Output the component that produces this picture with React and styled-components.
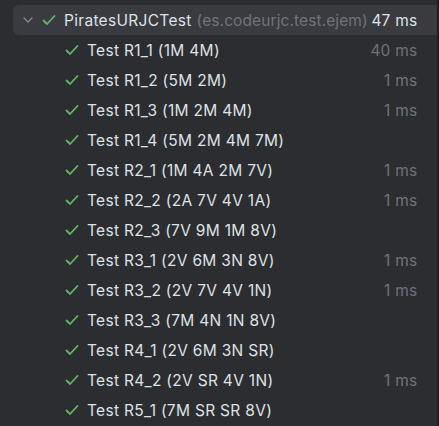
import React from "react";
import styled, { createGlobalStyle } from "styled-components";

const GlobalStyle = createGlobalStyle`
  html, body {
    margin: 0;
    background: #2b2d30;
  }
  body {
    font-family: Inter, "Noto Sans", sans-serif;
  }
`;

const tests = [
  { name: "Test R1_1 (1M 4M)", time: "40 ms" },
  { name: "Test R1_2 (5M 2M)", time: "1 ms" },
  { name: "Test R1_3 (1M 2M 4M)", time: "1 ms" },
  { name: "Test R1_4 (5M 2M 4M 7M)", time: "" },
  { name: "Test R2_1 (1M 4A 2M 7V)", time: "1 ms" },
  { name: "Test R2_2 (2A 7V 4V 1A)", time: "1 ms" },
  { name: "Test R2_3 (7V 9M 1M 8V)", time: "" },
  { name: "Test R3_1 (2V 6M 3N 8V)", time: "1 ms" },
  { name: "Test R3_2 (2V 7V 4V 1N)", time: "1 ms" },
  { name: "Test R3_3 (7M 4N 1N 8V)", time: "" },
  { name: "Test R4_1 (2V 6M 3N SR)", time: "" },
  { name: "Test R4_2 (2V SR 4V 1N)", time: "1 ms" },
  { name: "Test R5_1 (7M SR SR 8V)", time: "" },
];

const Panel = styled.div`
  width: 439px;
  height: 426px;
  box-sizing: border-box;
  padding-top: 5px;
  border-right: 2px solid #1e1f22;
  background: #2b2d30;
  overflow: hidden;
`;

const Row = styled.div`
  height: 30px;
  display: flex;
  align-items: center;
  margin-left: 13px;
  padding-left: ${(p) => (p.$root ? "0" : "52px")};
  padding-right: 20px;
  background: ${(p) => (p.$root ? "#393b40" : "transparent")};
  border-radius: ${(p) => (p.$root ? "6px 0 0 6px" : "0")};
  font-size: 15.5px;
  letter-spacing: 0.3px;
  color: #dfe1e5;
  white-space: nowrap;
`;

const Chevron = styled.span`
  width: 29px;
  display: flex;
  justify-content: center;
  color: #868a91;
`;

const Check = styled.span`
  width: 22px;
  display: flex;
  align-items: center;
  flex-shrink: 0;
`;

const Name = styled.span`
  flex: 1;
  min-width: 0;
  overflow: hidden;
`;

const Package = styled.span`
  color: #6f737a;
  margin-left: 5px;
  letter-spacing: 0.1px;
`;

const Time = styled.span`
  color: ${(p) => (p.$bright ? "#dfe1e5" : "#6f737a")};
  margin-left: 4px;
  margin-right: -0.3px;
  letter-spacing: 0.2px;
  flex-shrink: 0;
`;

const CheckIcon = () => (
  <svg width="14" height="12" viewBox="0 0 14 12">
    <path d="M1.5 6.5 L5 10 L12.5 2" fill="none" stroke="#5fb865" strokeWidth="1.8" strokeLinecap="round" strokeLinejoin="round" />
  </svg>
);

const ChevronIcon = () => (
  <svg width="10" height="6" viewBox="0 0 10 6">
    <path d="M1 1 L5 5 L9 1" fill="none" stroke="#868a91" strokeWidth="1.2" strokeLinecap="round" strokeLinejoin="round" />
  </svg>
);

export default function App() {
  return (
    <>
      <GlobalStyle />
      <Panel>
        <Row $root>
          <Chevron>
            <ChevronIcon />
          </Chevron>
          <Check>
            <CheckIcon />
          </Check>
          <Name>
            PiratesURJCTest<Package>(es.codeurjc.test.ejem)</Package>
          </Name>
          <Time $bright>47 ms</Time>
        </Row>
        {tests.map((t) => (
          <Row key={t.name}>
            <Check>
              <CheckIcon />
            </Check>
            <Name>{t.name}</Name>
            <Time>{t.time}</Time>
          </Row>
        ))}
      </Panel>
    </>
  );
}
